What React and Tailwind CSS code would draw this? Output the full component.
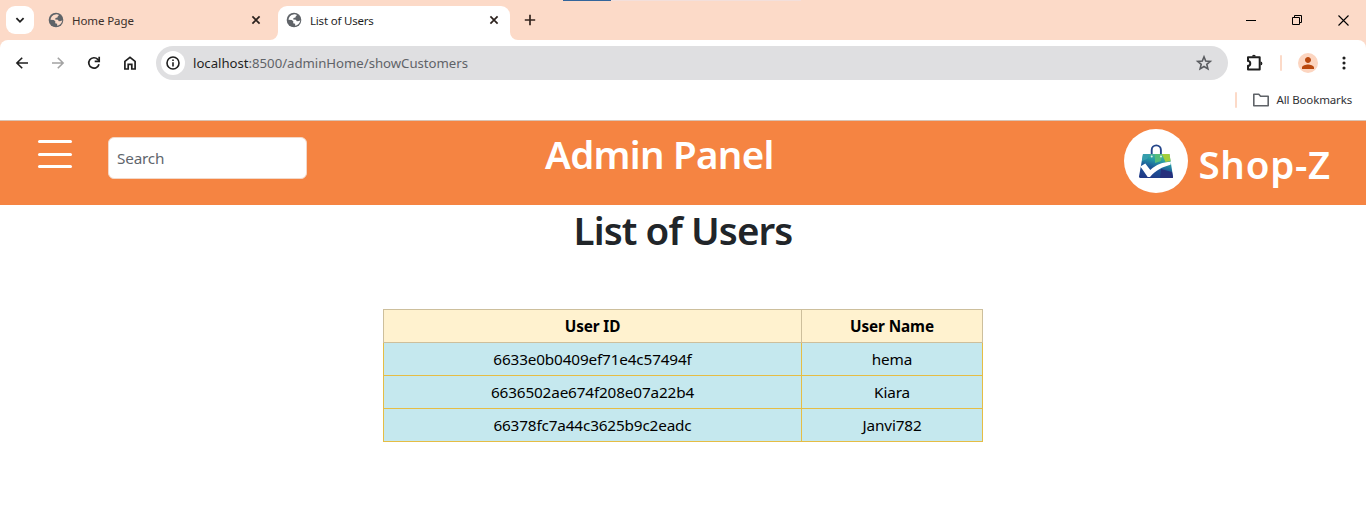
import React from "react";
import { MdPerson } from "react-icons/md";

const users = [
  { id: "6633e0b0409ef71e4c57494f", name: "hema" },
  { id: "6636502ae674f208e07a22b4", name: "Kiara" },
  { id: "66378fc7a44c3625b9c2eadc", name: "Janvi782" },
];

function Stroke({ size = 16, width = 1.8, className = "", children }) {
  return (
    <svg
      width={size}
      height={size}
      viewBox={`0 0 ${size} ${size}`}
      fill="none"
      stroke="currentColor"
      strokeWidth={width}
      className={`shrink-0 ${className}`}
    >
      {children}
    </svg>
  );
}

function CloseIcon() {
  return (
    <Stroke size={10} width={1.7} className="text-[#2b211d]">
      <path d="M1.4 1.4 8.6 8.6M8.6 1.4 1.4 8.6" />
    </Stroke>
  );
}

function GlobeIcon({ land }) {
  return (
    <svg width="16" height="16" viewBox="0 0 16 16" className="shrink-0">
      <circle cx="8" cy="8" r="7.3" fill="#5f6368" />
      <path
        d="M7.500 2.400c1.700-.2 2.600.1 3.500.7l-1.300 1.300-.2 1.100-2 .5-.3 1.500 2.700.2.900 1.500 2.500-.3.900-.9c0 3-2.200 5.400-5 5.700l-.1-1.900-1.900-.6.100-2L5.700 8 2.500 7.700C2.600 5 4.700 2.800 7.500 2.400Z"
        fill={land}
      />
    </svg>
  );
}

function TabStrip() {
  return (
    <div className="relative flex h-10 items-start bg-[#fcdac8]">
      <div className="absolute left-[563px] top-0 h-px w-12 bg-[#33659b]" />
      <div className="absolute left-[611px] top-0 h-px w-[190px] bg-[#f3dfdb]" />
      <button className="ml-1.5 mt-1.5 flex h-7 w-7 items-center justify-center rounded-[9px] bg-white">
        <Stroke size={10} width={1.8} className="text-[#1f1f1f]">
          <path d="M1.4 3.2 5 6.8 8.6 3.2" />
        </Stroke>
      </button>
      <div className="ml-3.5 flex h-10 w-[222px] items-center">
        <GlobeIcon land="#fcdac8" />
        <span className="ml-2 flex-1 pt-px text-[11.5px] tracking-[-0.1px] text-[#3b2f2a]">Home Page</span>
        <div className="mr-[9px]"><CloseIcon /></div>
      </div>
      <svg width="8" height="40" viewBox="0 0 8 40" className="shrink-0">
        <path d="M8 32v8H0a8 8 0 0 0 8-8Z" fill="#fff" />
      </svg>
      <div className="mt-1.5 flex h-[34px] w-[232px] items-center rounded-t-[9px] bg-white pb-1.5 pl-2 pr-[11px]">
        <GlobeIcon land="#fff" />
        <span className="ml-2 flex-1 pt-px text-[11.5px] tracking-[-0.2px] text-[#1f1f1f]">List of Users</span>
        <CloseIcon />
      </div>
      <svg width="8" height="40" viewBox="0 0 8 40" className="shrink-0">
        <path d="M0 32v8h8a8 8 0 0 1-8-8Z" fill="#fff" />
      </svg>
      <div className="ml-1.5 flex h-10 items-center">
        <Stroke size={12} width={1.7} className="text-[#33241e]">
          <path d="M6 .8v10.4M.8 6h10.4" />
        </Stroke>
      </div>
      <div className="ml-auto flex h-10 items-center gap-9 pr-[17px] text-black">
        <Stroke size={10} width={1}><path d="M0 5.5h10" /></Stroke>
        <Stroke size={10} width={1}><path d="M.5 2.5h7v7h-7zM2.5 2.5v-2h7v7h-2" /></Stroke>
        <Stroke size={11} width={1.1}><path d="M.5.5l10 10M10.500.5l-10 10" /></Stroke>
      </div>
    </div>
  );
}

function Toolbar() {
  return (
    <div className="bg-[#fcdac8]">
      <div className="flex h-[46px] items-center rounded-t-lg bg-white pl-[15px] pr-[15px] text-[#1f1f1f]">
        <Stroke size={14} width={1.600}><path d="M13 7H2M7.200 1.700 1.900 7l5.300 5.300" /></Stroke>
        <Stroke size={14} width={1.600} className="ml-[22px] text-[#a3a3a3]"><path d="M1 7h11M6.800 1.700 12.100 7l-5.300 5.300" /></Stroke>
        <Stroke size={14} width={1.700} className="ml-[22px]">
          <path d="M12 8.300A5.200 5.200 0 1 1 10.800 3.400L12 4.700" />
          <path d="M12.200.8v4.500H7.700" />
        </Stroke>
        <Stroke size={14} width={1.700} className="ml-[22px]">
          <path d="M1.900 13V5.300L7 1.300l5.100 4V13H8.800V8.300H5.200V13Z" />
        </Stroke>
        <div className="ml-[19px] flex h-[34px] w-[1072px] items-center rounded-full bg-[#dfdfe1] pl-[5px] pr-[15px]">
          <span className="flex h-6 w-6 items-center justify-center rounded-full bg-white">
            <Stroke size={14} width={1.600} className="text-[#1f1f1f]">
              <circle cx="7" cy="7" r="6" />
              <path d="M7 6.200v4.300M7 3.500v1.600" />
            </Stroke>
          </span>
          <span className="ml-2 pt-px text-[13.2px] tracking-[-0.02px] text-[#5f6368]">
            <span className="text-[#1f1f1f]">localhost</span>:8500/adminHome/showCustomers
          </span>
          <Stroke size={18} width={1.600} className="ml-auto text-[#5a5c60]">
            <path d="m9 2.800 1.700 4.200 4.600.4-3.500 3 1.100 4.500L9 12.500l-3.900 2.400 1.100-4.500-3.500-3L7.300 7Z" />
          </Stroke>
        </div>
        <Stroke size={18} width={2} className="ml-[17px]">
          <path d="M3 3.300h11.700v12.200H3v-3.700c3 0 3-4.800 0-4.800Z" strokeLinejoin="round" />
          <path d="M7 2.600a1.900 1.900 0 0 1 3.800 0ZM15.500 7.500a1.900 1.900 0 0 1 0 3.800Z" fill="currentColor" stroke="none" />
        </Stroke>
        <div className="ml-[17px] h-4 w-0.5 rounded bg-[#fcdac8]" />
        <span className="ml-4 flex h-5 w-5 items-center justify-center rounded-full bg-[#fcd5c0]">
          <MdPerson className="h-[18px] w-[18px] text-[#b9480e]" />
        </span>
        <svg width="4" height="14" viewBox="0 0 4 14" fill="currentColor" className="ml-6 shrink-0">
          <circle cx="2" cy="2" r="1.550" />
          <circle cx="2" cy="7" r="1.550" />
          <circle cx="2" cy="12" r="1.550" />
        </svg>
      </div>
    </div>
  );
}

function BookmarksBar() {
  return (
    <div className="flex h-[35px] items-center justify-end border-b border-[#d9c3b4] bg-white pb-1.5 pr-[14px]">
      <div className="h-4 w-0.5 rounded bg-[#fcdac8]" />
      <Stroke size={18} width={1.600} className="ml-[15px] text-[#5f6368]">
        <path d="M1.800 3.200h5l1.800 2h7.600v9.600H1.800Z" strokeLinejoin="round" />
      </Stroke>
      <span className="ml-[7px] text-[11.5px] tracking-[-0.15px] text-[#303134]">All Bookmarks</span>
    </div>
  );
}

function Logo() {
  return (
    <svg width="64" height="64" viewBox="0 0 64 64" className="shrink-0">
      <defs>
        <linearGradient id="bag" x1="0.3" y1="1" x2="0.7" y2="0">
          <stop offset="0" stopColor="#203a87" />
          <stop offset="0.4" stopColor="#1c5598" />
          <stop offset="0.7" stopColor="#249aa6" />
          <stop offset="1" stopColor="#5cc08a" />
        </linearGradient>
      </defs>
      <circle cx="32" cy="32" r="32" fill="#fff" />
      <path d="M27.700 27v-6a4.600 4.600 0 0 1 9.200 0v6" fill="none" stroke="#24458a" strokeWidth="1.900" />
      <path d="M19 25h26.500l3.500 22.500q0 1.500-1.500 1.500h-31q-1.500 0-1.500-1.500Z" fill="url(#bag)" />
      <path d="M38 25h7.500l1 7-5 1Z" fill="#a4ce3b" />
      <path d="M31 25h7l-1 7-6 2Z" fill="#55bd7b" />
      <path d="M19 25h7l-3 5-5 2Z" fill="#369ead" />
      <path d="m37 40 11 3 1 6H36Z" fill="#262f7c" />
      <path d="m16.300 37.500 5-3 5 6.500c6-5.500 12-7.700 20.700-8.200l-.5 3c-8.500 2.400-14.500 5.300-20.500 12.200h-2.300l-5.200-7.500Z" fill="#fff" />
      <circle cx="27.700" cy="27.500" r="1" fill="#dff2ed" />
      <circle cx="37" cy="27.500" r="1" fill="#dff2ed" />
    </svg>
  );
}

function AdminHeader() {
  return (
    <header className="flex h-[84px] items-start bg-[#f58442] text-white">
      <button className="ml-[38px] mt-[19px] flex flex-col gap-[9.700px]">
        <span className="h-[3px] w-[34px] rounded-full bg-white" />
        <span className="h-[3px] w-[34px] rounded-full bg-white" />
        <span className="h-[3px] w-[34px] rounded-full bg-white" />
      </button>
      <input
        placeholder="Search"
        className="ml-9 mt-4 h-[42px] w-[199px] rounded-md border border-[#f3d8c8] bg-white px-2 text-[15.300px] tracking-[-0.2px] placeholder:text-[#5f666d]"
      />
      <h1 className="ml-[238px] mt-1.5 whitespace-nowrap text-[38.500px] font-semibold leading-[54px] tracking-[-0.720px]">Admin Panel</h1>
      <div className="ml-auto mt-2 flex pr-[35px]">
        <Logo />
        <span className="ml-[10px] mt-2 whitespace-nowrap text-[38.500px] font-semibold leading-[54px] tracking-[0.750px]">Shop-Z</span>
      </div>
    </header>
  );
}

function UserTable() {
  return (
    <div className="mx-auto mt-[50px] w-[600px] text-center text-[15.300px] text-black">
      <div className="grid h-[34px] grid-cols-[418px_181px] border-l border-t border-[#cdbf9c] bg-[#fff2cf] font-bold tracking-[-0.1px]">
        <div className="border-b border-r border-[#cdbf9c] leading-[32px]">User ID</div>
        <div className="border-b border-r border-[#cdbf9c] leading-[32px]">User Name</div>
      </div>
      {users.map((user) => (
        <div key={user.id} className="grid h-[33px] grid-cols-[418px_181px] border-l border-[#e5bd45] bg-[#c5e8ee] tracking-[-0.150px]">
          <div className="border-b border-r border-[#e5bd45] leading-[32px]">{user.id}</div>
          <div className="border-b border-r border-[#e5bd45] leading-[32px]">{user.name}</div>
        </div>
      ))}
    </div>
  );
}

export default function App() {
  return (
    <div className="h-[514px] w-[1366px] overflow-hidden bg-white font-['Noto_Sans',sans-serif]">
      <TabStrip />
      <Toolbar />
      <BookmarksBar />
      <AdminHeader />
      <main>
        <h2 className="-mt-0.5 h-14 text-center text-[38.500px] font-semibold leading-[54px] tracking-[-0.900px] text-[#212529]">List of Users</h2>
        <UserTable />
      </main>
    </div>
  );
}
